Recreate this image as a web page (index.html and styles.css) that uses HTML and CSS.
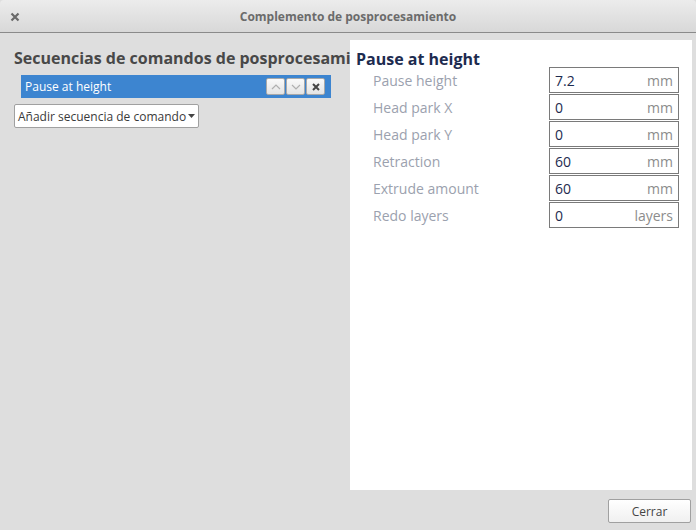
FILE: index.html
```html
<!DOCTYPE html>
<html lang="es">
<head>
<meta charset="utf-8">
<title>Complemento de posprocesamiento</title>
<link rel="stylesheet" href="styles.css">
</head>
<body>
<div class="window">
  <header class="titlebar">
    <span class="close-x">
      <svg width="10" height="10" viewBox="0 0 10 10"><path d="M1.5 1.5 L8.5 8.5 M8.5 1.5 L1.5 8.5" stroke="#6a6a6a" stroke-width="2.2"/></svg>
    </span>
    <span class="title">Complemento de posprocesamiento</span>
  </header>
  <main class="content">
    <section class="left">
      <h2 class="left-heading">Secuencias de comandos de posprocesamiento</h2>
      <div class="script-item">
        <span class="script-name">Pause at height</span>
        <div class="item-buttons">
          <span class="mini-btn"><svg width="10" height="6" viewBox="0 0 10 6"><path d="M1 5 L5 1 L9 5" fill="none" stroke="#b0b0b0" stroke-width="1.2"/></svg></span>
          <span class="mini-btn"><svg width="10" height="6" viewBox="0 0 10 6"><path d="M1 1 L5 5 L9 1" fill="none" stroke="#b0b0b0" stroke-width="1.2"/></svg></span>
          <span class="mini-btn"><svg width="8" height="8" viewBox="0 0 8 8"><path d="M1 1 L7 7 M7 1 L1 7" stroke="#444" stroke-width="2"/></svg></span>
        </div>
      </div>
      <button class="add-btn">Añadir secuencia de comando<svg class="caret" width="7" height="4" viewBox="0 0 7 4"><path d="M0 0 L7 0 L3.5 4 Z" fill="#444"/></svg></button>
    </section>
    <section class="panel">
      <h2 class="panel-heading">Pause at height</h2>
      <div class="settings">
        <div class="row"><span class="label">Pause height</span><div class="field"><span class="val">7.2</span><span class="unit">mm</span></div></div>
        <div class="row"><span class="label">Head park X</span><div class="field"><span class="val">0</span><span class="unit">mm</span></div></div>
        <div class="row"><span class="label">Head park Y</span><div class="field"><span class="val">0</span><span class="unit">mm</span></div></div>
        <div class="row"><span class="label">Retraction</span><div class="field"><span class="val">60</span><span class="unit">mm</span></div></div>
        <div class="row"><span class="label">Extrude amount</span><div class="field"><span class="val">60</span><span class="unit">mm</span></div></div>
        <div class="row"><span class="label">Redo layers</span><div class="field"><span class="val">0</span><span class="unit">layers</span></div></div>
      </div>
    </section>
  </main>
  <footer class="footer">
    <button class="close-btn">Cerrar</button>
  </footer>
</div>
</body>
</html>
```
FILE: styles.css
```css
* { box-sizing: border-box; }
html, body { margin: 0; padding: 0; }
body {
  width: 696px;
  height: 530px;
  background: #dedede;
  font-family: "Open Sans", "DejaVu Sans", sans-serif;
  overflow: hidden;
}
.window {
  width: 696px;
  height: 530px;
  display: flex;
  flex-direction: column;
  background: #dedede;
  border-radius: 4px 4px 0 0;
}
.titlebar {
  height: 33px;
  flex: none;
  position: relative;
  display: flex;
  align-items: center;
  justify-content: center;
  background: linear-gradient(#ececec, #d8d8d8);
  border-bottom: 1px solid #8a8a8a;
  border-radius: 4px 4px 0 0;
}
.close-x {
  position: absolute;
  left: 10px;
  top: 12px;
  display: flex;
}
.title {
  font-size: 12px;
  font-weight: bold;
  color: #6b6b6b;
  margin-top: 1px;
}
.content {
  flex: 1;
  display: flex;
  padding: 7px 4px 0 14px;
}
.left {
  width: 336px;
  flex: none;
  overflow: hidden;
}
.left-heading {
  margin: 7px 0 0 0;
  font-size: 16px;
  font-weight: bold;
  color: #484848;
  white-space: nowrap;
  overflow: hidden;
  text-overflow: clip;
  line-height: 22px;
}
.script-item {
  margin: 6px 0 0 7px;
  width: 310px;
  height: 23px;
  background: #3d85d0;
  display: flex;
  align-items: center;
  justify-content: space-between;
  padding: 0 6px 0 4px;
}
.script-name {
  color: #ffffff;
  font-size: 12px;
}
.item-buttons {
  display: flex;
  gap: 1px;
}
.mini-btn {
  width: 19px;
  height: 17px;
  background: linear-gradient(#fafafa, #e4e4e4);
  border: 1px solid #a9a9a9;
  border-radius: 2px;
  display: flex;
  align-items: center;
  justify-content: center;
}
.add-btn {
  margin-top: 6px;
  height: 24px;
  width: 185px;
  background: #ffffff;
  border: 1px solid #a0a0a0;
  border-radius: 2px;
  font-family: "Open Sans", "DejaVu Sans", sans-serif;
  font-size: 12px;
  color: #3a3a3a;
  padding: 0 2px 0 3px;
  display: flex;
  align-items: center;
  white-space: nowrap;
}
.caret { margin-left: 2px; }
.panel {
  width: 342px;
  flex: none;
  height: 450px;
  background: #ffffff;
  padding: 7px 6px 0 6px;
}
.panel-heading {
  margin: 0;
  font-size: 16px;
  font-weight: bold;
  color: #1d2b4f;
  line-height: 24px;
}
.settings {
  display: flex;
  flex-direction: column;
  gap: 1px;
  margin-top: -4px;
}
.row {
  display: flex;
  align-items: center;
  justify-content: space-between;
  padding-left: 17px;
  padding-right: 7px;
  height: 26px;
}
.label {
  font-size: 14px;
  color: #9ba1ae;
}
.field {
  width: 130px;
  height: 26px;
  border: 1px solid #7a7a7a;
  display: flex;
  align-items: center;
  justify-content: space-between;
  padding: 0 5px;
  font-size: 14px;
}
.val { color: #1d2b4f; }
.unit { color: #8c8c8c; }
.footer {
  height: 40px;
  flex: none;
  display: flex;
  justify-content: flex-end;
  align-items: flex-start;
  padding: 9px 5px 0 0;
}
.close-btn {
  width: 83px;
  height: 24px;
  background: linear-gradient(#ffffff, #f0f0f0);
  border: 1px solid #a0a0a0;
  border-radius: 2px;
  font-family: "Open Sans", "DejaVu Sans", sans-serif;
  font-size: 12px;
  color: #444;
}
```
